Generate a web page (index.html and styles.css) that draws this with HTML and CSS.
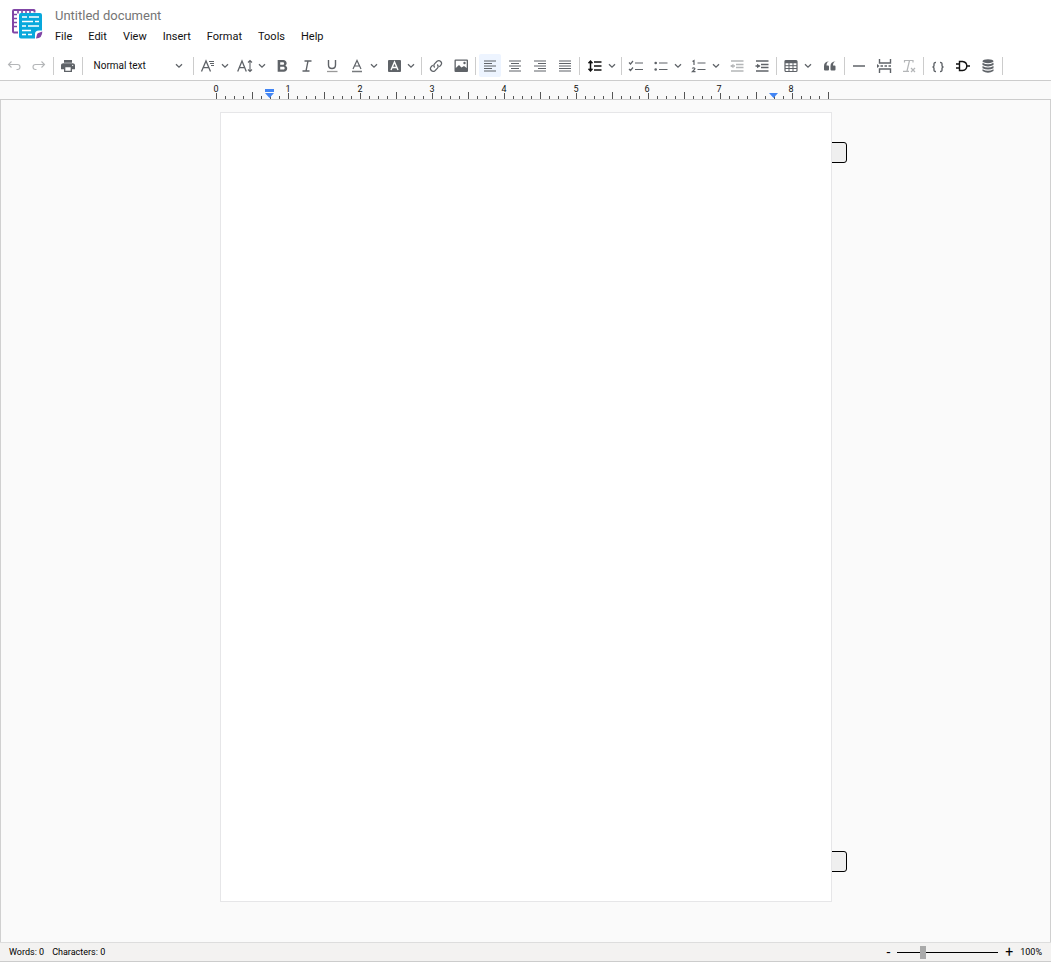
FILE: index.html
```
<!DOCTYPE html>
<html lang="en">
<head>
<meta charset="utf-8">
<title>Untitled document</title>
<link rel="stylesheet" href="styles.css">
</head>
<body class="app">
<svg class="defs" aria-hidden="true"><defs>
<symbol id="chev" viewBox="0 0 8 6"><path d="M1 1.2 4 4.2 7 1.2" fill="none" stroke="currentColor" stroke-width="1.3"/></symbol>
<symbol id="undo" viewBox="0 0 16 16"><path d="M5.500 3.500 2.500 6.500 5.500 9.500M2.500 6.500H11.500Q14 6.500 14 9T11.500 11.500H10.500" fill="none" stroke="currentColor" stroke-width="1.1"/></symbol>
</defs></svg>
<header class="header">
  <svg class="logo" viewBox="0 0 32 32" aria-hidden="true">
    <path d="M22.500 4.500V2.500Q22.500 2 22 2H2Q1 2 1 3V23.500Q1 24.500 2 24.500H6" fill="none" stroke="#8146a6" stroke-width="2"/>
    <path d="M6 2v3.500M10 2v3M14 2v3M18 2v3M1 6.500h4M1 10.500h4M1 14.500h4M1 18.500h4" stroke="#8146a6" stroke-width="1.600"/>
    <path d="M9 5H28Q30 5 30 7V22.500H27Q23 22.500 23 26V30.500H9Q7 30.500 7 28.500V7Q7 5 9 5Z" fill="#08a8dc"/>
    <path d="M10 9h5M17 9h10M10 13.500h11M23 13.500h4M10 18h4M16 18h11M10 22.500h9M10 26.500h4M16 26.500h4" stroke="#fff" stroke-width="1.600"/>
    <path d="M30.300 23.500Q30.500 30 24 30.600 24.500 28.500 25 26.500 25.500 25 27 24.700Z" fill="#8146a6"/>
  </svg>
  <div class="heading">
    <h1 class="title">Untitled document</h1>
    <nav class="menu" aria-label="Main menu">
      <button class="menu-item">File</button><button class="menu-item">Edit</button><button class="menu-item">View</button><button class="menu-item">Insert</button><button class="menu-item">Format</button><button class="menu-item">Tools</button><button class="menu-item">Help</button>
    </nav>
  </div>
</header>

<div class="toolbar" role="toolbar" aria-label="Formatting">
 <div class="tools">
  <button class="tool faded" aria-label="Undo"><svg class="icon"><use href="#undo"/></svg></button>
  <button class="tool faded" aria-label="Redo"><svg class="icon flip"><use href="#undo"/></svg></button>
  <span class="sep"></span>
  <button class="tool" aria-label="Print"><svg class="icon" viewBox="0 0 24 24"><path fill="currentColor" d="M19 8H5c-2 0-3.500 1.300-3.500 3v6H6v4h12v-4h4.500v-6c0-1.700-1.500-3-3.500-3zm-3 11H8v-5h8v5zm3-7c-.6 0-1-.4-1-1s.4-1 1-1 1 .4 1 1-.4 1-1 1zM18 3H6v4h12V3z"/></svg></button>
  <span class="sep"></span>
  <button class="style-picker" aria-label="Paragraph style"><span>Normal text</span><svg class="chev"><use href="#chev"/></svg></button>
  <span class="sep"></span>
  <button class="tool drop" aria-label="Font family"><svg class="icon" viewBox="0 0 16 16"><g fill="none" stroke="currentColor"><path d="M1.500 13.500 6 3 10.500 13.500M3.200 9.700H8.800" stroke-width="1.300"/><path d="M9 3.500h5M10 5.500h4M11 7.500h3" stroke-width="1"/></g></svg><svg class="chev"><use href="#chev"/></svg></button>
  <button class="tool drop" aria-label="Font size"><svg class="icon" viewBox="0 0 16 16"><g fill="none" stroke="currentColor"><path d="M.7 13.500 5 3 9.300 13.500M2.300 9.700H7.700" stroke-width="1.300"/><path d="M13 3v10M11 4.500 13 2.500 15 4.500M11 11.500 13 13.500 15 11.500" stroke-width="1.100"/></g></svg><svg class="chev"><use href="#chev"/></svg></button>
  <button class="tool" aria-label="Bold"><svg class="icon" viewBox="0 0 24 24"><path fill="currentColor" d="M17 11.500c1.200-.9 2-2.200 2-3.600C19 5 16.800 3 14 3H5.500v17.500h9.300c2.900 0 5-2.200 5-4.900 0-1.900-1.100-3.400-2.800-4.100zM9.300 6.200h4c1 0 1.900.8 1.900 1.900S14.300 10 13.300 10h-4V6.200zm4.700 11.100H9.300v-4.200H14c1.100 0 2 .9 2 2.100s-.9 2.100-2 2.100z"/></svg></button>
  <button class="tool" aria-label="Italic"><svg class="icon" viewBox="0 0 16 16"><path d="M5.500 3h7M3.500 13h7M9 3 7 13" fill="none" stroke="currentColor" stroke-width="1.300"/></svg></button>
  <button class="tool" aria-label="Underline"><svg class="icon" viewBox="0 0 16 16"><path d="M4.500 2V7Q4.500 10.500 8 10.500T11.500 7V2" fill="none" stroke="currentColor" stroke-width="1.400"/><path d="M3 13.500H13.500" stroke="#999" stroke-width="1.300"/></svg></button>
  <button class="tool drop" aria-label="Text color"><svg class="icon" viewBox="0 0 16 16"><path d="M4 11 8 2.500 12 11M5.500 8H10.500" fill="none" stroke="currentColor" stroke-width="1.200"/><path d="M3 13.500H13" stroke="#777a7d" stroke-width="1.500"/></svg><svg class="chev"><use href="#chev"/></svg></button>
  <button class="tool drop" aria-label="Highlight color"><svg class="icon" viewBox="0 0 16 16"><rect x="2" y="2" width="13" height="12" rx="1" fill="currentColor"/><path d="M5 12 8.500 4 12 12M6.300 9.500h4.400" fill="none" stroke="#fff" stroke-width="1.400"/></svg><svg class="chev"><use href="#chev"/></svg></button>
  <span class="sep"></span>
  <button class="tool" aria-label="Insert link"><svg class="icon" viewBox="0 0 16 16"><g fill="none" stroke="currentColor" stroke-width="1.200"><path d="M6.700 9.500Q5 7.500 6.500 5.800L9 3.300Q11 1.800 12.700 3.500T13 7L11.300 8.800"/><path d="M9.300 6.500Q11 8.500 9.500 10.200L7 12.700Q5 14.200 3.300 12.500T3 9L4.700 7.200"/></g></svg></button>
  <button class="tool" aria-label="Insert image"><svg class="icon" viewBox="0 0 16 16"><path fill="currentColor" fill-rule="evenodd" d="M2.500 1.500h11.500q1 0 1 1v10.500q0 1-1 1H2.500q-1 0-1-1V2.500q0-1 1-1ZM2.800 2.700V10L6 7l2.500 2.500L11 8 13.700 10V2.700Z"/><circle cx="11.500" cy="5" r="1.200" fill="currentColor"/></svg></button>
  <span class="sep"></span>
  <button class="tool active" aria-label="Align left" aria-pressed="true"><svg class="icon" viewBox="0 0 16 16"><path d="M2 3h12M2 5.500h8M2 8h12M2 10.500h8M2 13h12" stroke="currentColor" stroke-width="1.200"/></svg></button>
  <button class="tool" aria-label="Align center"><svg class="icon" viewBox="0 0 16 16"><path d="M2 3h12M4 5.500h8M2 8h12M4 10.500h8M2 13h12" stroke="currentColor" stroke-width="1.200"/></svg></button>
  <button class="tool" aria-label="Align right"><svg class="icon" viewBox="0 0 16 16"><path d="M2 3h12M6 5.500h8M2 8h12M6 10.500h8M2 13h12" stroke="currentColor" stroke-width="1.200"/></svg></button>
  <button class="tool" aria-label="Justify"><svg class="icon" viewBox="0 0 16 16"><path d="M2 3h12M2 5.500h12M2 8h12M2 10.500h12M2 13h12" stroke="currentColor" stroke-width="1.200"/></svg></button>
  <span class="sep"></span>
  <button class="tool drop" aria-label="Line spacing"><svg class="icon dark" viewBox="0 0 16 16"><path d="M3.500 3.500v9M1.500 5.200 3.500 3 5.500 5.200M1.500 10.800 3.500 13 5.500 10.800M7 4h7.500M7 8h7.500M7 12h7.500" fill="none" stroke="currentColor" stroke-width="1.500"/></svg><svg class="chev"><use href="#chev"/></svg></button>
  <span class="sep"></span>
  <button class="tool" aria-label="Checklist"><svg class="icon" viewBox="0 0 16 16"><path d="M1 4.500 2.500 6 5 3M1 11 2.500 12.500 5 9.500M7 5h8M7 11.500h8" fill="none" stroke="currentColor" stroke-width="1.200"/></svg></button>
  <button class="tool drop wide" aria-label="Bulleted list"><svg class="icon" viewBox="0 0 16 16"><g fill="currentColor"><circle cx="2.700" cy="5" r="1.300"/><circle cx="2.700" cy="11.500" r="1.300"/></g><path d="M6 5h8.500M6 11.500h8.500" stroke="currentColor" stroke-width="1.200"/></svg><svg class="chev"><use href="#chev"/></svg></button>
  <button class="tool drop wide" aria-label="Numbered list"><svg class="icon" viewBox="0 0 16 16"><path d="M1.500 3.500 3 2.500V7M1.200 10.500Q2 9.500 3.300 10T3 12L1.300 13.700H4.500M6.500 5H14.500M6.500 11.500H14.500" fill="none" stroke="currentColor" stroke-width="1.200"/></svg><svg class="chev"><use href="#chev"/></svg></button>
  <button class="tool faded" aria-label="Decrease indent"><svg class="icon" viewBox="0 0 16 16"><path d="M2 3h12.500M7 6.500h7.500M7 9.500h7.500M2 13h12.500M2 8h4" stroke="currentColor" stroke-width="1.300"/><path d="M1 8 4.500 5.800v4.400Z" fill="currentColor"/></svg></button>
  <button class="tool" aria-label="Increase indent"><svg class="icon" viewBox="0 0 16 16"><path d="M2 3h12.500M7 6.500h7.500M7 9.500h7.500M2 13h12.500M1.500 8h4" stroke="currentColor" stroke-width="1.300"/><path d="M6.500 8 3 5.800v4.400Z" fill="currentColor"/></svg></button>
  <span class="sep"></span>
  <button class="tool drop wide" aria-label="Table"><svg class="icon" viewBox="0 0 16 16"><rect x="2" y="2.500" width="12" height="11" rx="1" fill="none" stroke="currentColor" stroke-width="1.200"/><path d="M2 4h12" stroke="currentColor" stroke-width="2.500"/><path d="M2 7.700h12M2 10.500h12M6 4v9.500M10 4v9.500" stroke="currentColor"/></svg><svg class="chev"><use href="#chev"/></svg></button>
  <button class="tool" aria-label="Quote"><svg class="icon" viewBox="0 0 16 16"><path fill="currentColor" d="M7 3.500Q4.500 4.200 4.500 7.500H6q1 0 1 1v3q0 1-1 1H3q-1 0-1-1V8Q2 3.700 7 3.500ZM13.500 3.500Q11 4.200 11 7.500H12.500q1 0 1 1v3q0 1-1 1H9.500q-1 0-1-1V8Q8.500 3.700 13.500 3.500Z"/></svg></button>
  <span class="sep"></span>
  <button class="tool" aria-label="Horizontal line"><svg class="icon" viewBox="0 0 16 16"><path d="M2 8h12" stroke="currentColor" stroke-width="1.500"/></svg></button>
  <button class="tool" aria-label="Page break"><svg class="icon" viewBox="0 0 16 16"><path d="M3.500 1V5H14.500V1M3.500 15V11H14.500V15M4.500 8h2.500M8.500 8h2.500M12.500 8h2.500" fill="none" stroke="currentColor" stroke-width="1.400"/><path d="M1 6v4L3.500 8Z" fill="currentColor"/></svg></button>
  <button class="tool faded" aria-label="Clear formatting"><svg class="icon" viewBox="0 0 16 16"><path d="M3.500 4.500V2.500H12V4.500M8.500 2.500 6 13M2 13.300H8M10 10 14 14M14 10 10 14" fill="none" stroke="currentColor" stroke-width="1.200"/></svg></button>
  <span class="sep"></span>
  <button class="tool" aria-label="Code"><svg class="icon" viewBox="0 0 16 16"><path d="M6 4.500Q4 4.300 4 6V7.500Q4 9 2.500 9 4 9 4 10.500V12Q4 13.700 6 13.500M10 4.500Q12 4.300 12 6V7.500Q12 9 13.500 9 12 9 12 10.500V12Q12 13.700 10 13.500" fill="none" stroke="currentColor" stroke-width="1.400"/></svg></button>
  <button class="tool" aria-label="Conditional block"><svg class="icon dark" viewBox="0 0 16 16"><path d="M4.500 3.500H7.500Q11.800 4 11.800 8T7.500 12.500H4.500ZM1 6h3.500M1 10h3.500M12 8h3" fill="none" stroke="currentColor" stroke-width="1.400"/></svg></button>
  <button class="tool" aria-label="Data source"><svg class="icon" viewBox="0 0 16 16"><g fill="currentColor"><ellipse cx="8" cy="3.200" rx="5.500" ry="2"/><path d="M2.500 4.800Q8 7.800 13.500 4.800V7Q8 9.800 2.500 7ZM2.500 8Q8 11 13.500 8V10.200Q8 13 2.500 10.200ZM2.500 11.200Q8 14.200 13.500 11.200V13Q8 16.500 2.500 13Z"/></g></svg></button>
  <span class="sep"></span>
 </div>
</div>

<div class="ruler">
  <svg class="scale" viewBox="0 0 624 18" role="img" aria-label="Ruler, inches">
    <g stroke="#555" shape-rendering="crispEdges" fill="none">
      <path d="M4 16.500H616" stroke-width="3" stroke-dasharray="1 8"/>
      <path d="M4 15H616" stroke-width="6" stroke-dasharray="1 71"/>
      <path d="M40 14.500H617" stroke-width="7" stroke-dasharray="1 71"/>
    </g>
    <g class="numbers"><text x="4" y="11">0</text><text x="76" y="11">1</text><text x="148" y="11">2</text><text x="220" y="11">3</text><text x="292" y="11">4</text><text x="364" y="11">5</text><text x="435" y="11">6</text><text x="507" y="11">7</text><text x="579" y="11">8</text></g>
    <g fill="#4285f4"><path d="M53 8h9v3h-9ZM53 12h9l-4.500 5ZM557 12h9l-4.500 5Z"/></g>
  </svg>
</div>

<main class="workspace">
  <div class="sheet">
    <button class="tab tab-top" aria-label="Header"></button>
    <button class="tab tab-bottom" aria-label="Footer"></button>
    <div class="page" contenteditable="true" role="textbox" aria-label="Document"></div>
  </div>
</main>

<footer class="status">
  <span>Words: 0</span><span>Characters: 0</span>
  <div class="zoom">
    <button class="step" aria-label="Zoom out">-</button>
    <input class="slider" type="range" min="0" max="100" value="24" aria-label="Zoom">
    <button class="step" aria-label="Zoom in">+</button>
    <output class="percent">100%</output>
  </div>
</footer>
</body>
</html>
```
FILE: styles.css
```
* { box-sizing: border-box; }

.app {
  margin: 0;
  min-height: 100vh;
  display: flex;
  flex-direction: column;
  background: #fff;
  color: #202124;
  font-family: Roboto, "Liberation Sans", sans-serif;
  font-size: 11px;
}

.defs { position: absolute; width: 0; height: 0; }

button {
  margin: 0;
  padding: 0;
  border: 0;
  background: none;
  color: inherit;
  font: inherit;
}

.header { display: flex; gap: 11px; padding: 8px 12px 0; height: 51px; }
.logo { width: 32px; height: 32px; flex: none; }
.title {
  margin: 0;
  color: #757575;
  font-size: 13px;
  font-weight: 400;
  line-height: 16px;
}
.menu { display: flex; gap: 16px; margin-top: 5px; }
.menu-item { line-height: 16px; color: #111; }

.toolbar { border-bottom: 1px solid #ccc; padding: 3px 0 3px 3px; }
.tools {
  display: flex;
  align-items: center;
  justify-content: space-between;
  max-width: 1001px;
}
.tool {
  display: flex;
  align-items: center;
  flex: none;
  height: 23px;
  padding: 0 3px;
  border-radius: 2px;
  color: #5f6368;
}
.drop { padding-right: 2px; gap: 5px; }
.wide { padding-right: 3px; }
.faded { color: #b4b6b8; }
.active { background: #edf4ff; }
.icon { width: 16px; height: 16px; }
.flip { transform: scaleX(-1); }
.dark { color: #111; }
.chev { width: 8px; height: 6px; color: #5f6368; }
.sep { width: 1px; height: 18px; background: #ccc; }
.style-picker {
  display: flex;
  align-items: center;
  justify-content: space-between;
  flex: none;
  width: 103px;
  height: 23px;
  padding: 0 7px;
  font-size: 10px;
  color: #111;
}

.ruler {
  display: flex;
  justify-content: center;
  padding-right: 3px;
  background: #fafafa;
  border-bottom: 1px solid #ccc;
}
.scale { width: 624px; height: 18px; display: block; }
.numbers { font-size: 9px; text-anchor: middle; fill: #111; }

.workspace {
  flex: 1;
  display: flex;
  justify-content: center;
  align-items: flex-start;
  padding: 12px 0 40px;
  background: #fafafa;
  border: solid #d0d0d0;
  border-width: 0 1px;
}
.sheet { position: relative; }
.page {
  position: relative;
  width: 612px;
  min-height: 790px;
  background: #fff;
  border: 1px solid #e6e6e8;
  outline: none;
}
.tab {
  position: absolute;
  right: -15px;
  width: 30px;
  height: 21px;
  border: 1px solid #000;
  border-radius: 3px;
  background: #efefef;
}
.tab-top { top: 30px; }
.tab-bottom { bottom: 30px; }

.status {
  display: flex;
  align-items: center;
  gap: 8px;
  height: 20px;
  padding: 0 9px;
  background: #f3f2f1;
  border-top: 1px solid #ddd;
  border-bottom: 1px solid #ccc;
  font-size: 9px;
  color: #000;
}
.zoom { display: flex; align-items: center; gap: 7px; margin-left: auto; }
.step { font-size: 14px; line-height: 16px; }
.slider {
  appearance: none;
  width: 101px;
  height: 14px;
  margin: 0;
  background: linear-gradient(#000, #000) center / 100% 1px no-repeat;
}
.slider::-webkit-slider-thumb {
  appearance: none;
  width: 6px;
  height: 13px;
  background: #aaa;
}
```
